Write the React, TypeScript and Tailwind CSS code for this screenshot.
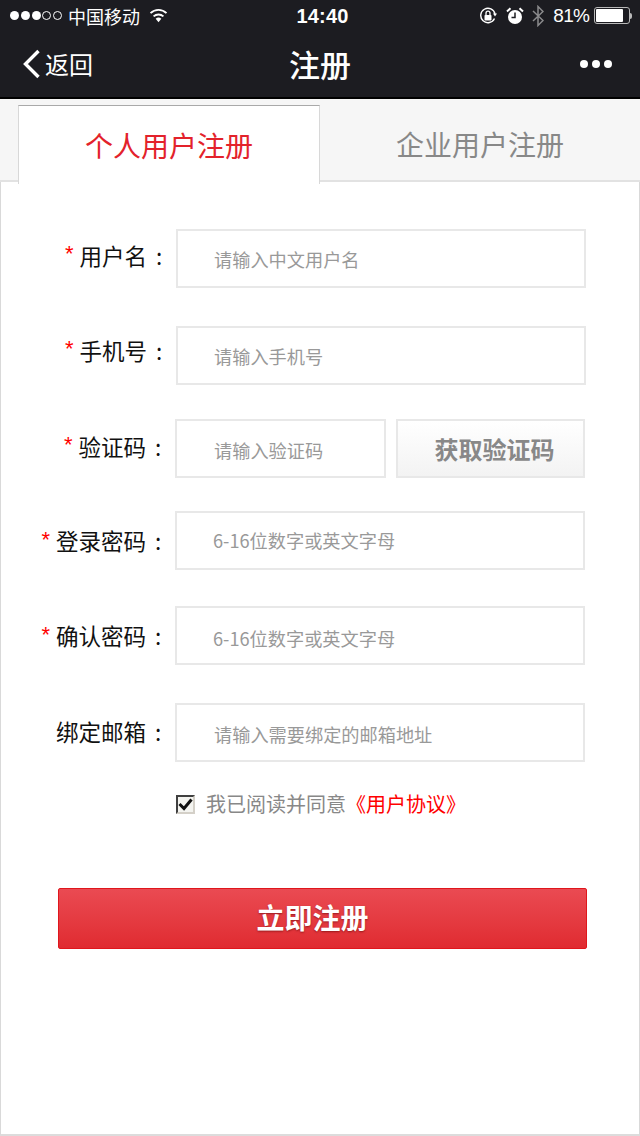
import React from "react";

const FONT = "font-['Noto_Sans_CJK_SC','Liberation_Sans',sans-serif]";

// ─── Status bar ────────────────────────────────────────────────────────────
const StatusBar = () => (
  <div className="flex h-[33px] items-center justify-between pb-[2px] pl-[10px] pr-[8px] text-white">
    <div className="flex w-[200px] items-center">
      <div className="flex gap-[1.75px]">
        {[0, 1, 2].map((i) => (
          <span key={i} className="h-[9px] w-[9px] rounded-full bg-white" />
        ))}
        {[3, 4].map((i) => (
          <span key={i} className="h-[9px] w-[9px] rounded-full border border-white" />
        ))}
      </div>
      <span className="ml-[6px] text-[18px] leading-[24px]">中国移动</span>
      <svg className="ml-[9px]" width="19" height="15" viewBox="0 0 20 15">
        <path d="M10 14.5 L7 10.8 A5 5 0 0 1 13 10.8 Z" fill="#fff" />
        <path d="M4.8 8.4 A7.8 7.8 0 0 1 15.2 8.4" fill="none" stroke="#fff" strokeWidth="2" />
        <path d="M1.6 5 A12 12 0 0 1 18.4 5" fill="none" stroke="#fff" strokeWidth="2" />
      </svg>
    </div>
    <span className="ml-[3px] font-['Liberation_Sans',sans-serif] text-[20px] font-bold leading-[24px] tracking-[0.2px]">14:40</span>
    <div className="flex w-[200px] items-center justify-end">
      <svg width="18" height="18" viewBox="0 0 18 18">
        <path d="M15.5 11.5 A7.2 7.2 0 1 1 16 7" fill="none" stroke="#fff" strokeWidth="1.4" />
        <path d="M14 6.5 L18 6.5 L16 9.5 Z" fill="#fff" />
        <rect x="5.5" y="8" width="7" height="5.5" rx="0.8" fill="#fff" />
        <path d="M7 8 V6.2 A2 2 0 0 1 11 6.2 V8" fill="none" stroke="#fff" strokeWidth="1.3" />
      </svg>
      <svg className="ml-[9px]" width="18" height="18" viewBox="0 0 18 18">
        <circle cx="9" cy="10" r="7" fill="#fff" />
        <path d="M9 5.5 V10.5 H5.5" fill="none" stroke="#1c1c21" strokeWidth="1.5" />
        <path d="M1 4.5 L4.5 1.2 M17 4.5 L13.5 1.2" stroke="#fff" strokeWidth="2" />
      </svg>
      <svg className="ml-[8px]" width="12" height="22" viewBox="0 0 12 22">
        <path d="M1 6 L11 15.5 L6 20.5 V1.5 L11 6.5 L1 16" fill="none" stroke="#8a8a8c" strokeWidth="1.5" />
      </svg>
      <span className="ml-[9px] font-['Liberation_Sans',sans-serif] text-[19px] leading-[24px] tracking-[-0.8px]">81%</span>
      <div className="ml-[5px] flex items-center">
        <div className="h-[17px] w-[36px] rounded-[3px] border border-[#b9b9b9] p-[1px]">
          <div className="h-full w-[27px] rounded-[1px] bg-white" />
        </div>
        <span className="h-[6px] w-[2px] rounded-r-[2px] bg-[#b9b9b9]" />
      </div>
    </div>
  </div>
);

const NavBar = () => (
  <div className="flex h-[66px] items-center justify-between border-b-2 border-b-black pb-[2px] pl-[22px] pr-[28px] text-white">
    <div className="flex w-[120px] items-center">
      <svg width="19" height="30" viewBox="0 0 19 30">
        <path d="M16.5 2 L3.5 15 L16.5 28" fill="none" stroke="#fff" strokeWidth="3.4" />
      </svg>
      <span className="ml-[4px] text-[24px] leading-[30px]">返回</span>
    </div>
    <span className="ml-[6px] text-[31px] font-medium leading-[40px]">注册</span>
    <div className="flex w-[120px] justify-end gap-[4px]">
      {[0, 1, 2].map((i) => (
        <span key={i} className="h-[8px] w-[8px] rounded-full bg-white" />
      ))}
    </div>
  </div>
);

// ─── Form rows ─────────────────────────────────────────────────────────────
const Label = ({ text, required, width, className }: { text: string; required?: boolean; width: number; className: string }) => (
  <div className={`flex shrink-0 items-center justify-end text-[22.5px] leading-[30px] text-[#111] ${className}`} style={{ width }}>
    {required && <span className="mr-[6px] mt-[-1px] font-['Liberation_Sans',sans-serif] text-[22px] text-[#f00]">*</span>}
    <span>{text}</span>
    <span className="ml-[9px] w-[20px] text-left">:</span>
  </div>
);

const Field = ({ hint, className }: { hint: string; className: string }) => (
  <div className={`flex h-[59px] items-center border-2 border-[#e8e8e8] bg-white text-[18.2px] leading-[24px] text-[#999] ${className}`}>
    {hint}
  </div>
);

export default function App() {
  return (
    <div className={`flex h-[1136px] w-[640px] flex-col overflow-hidden bg-white ${FONT}`}>
      <div className="bg-[#1c1c21]">
        <StatusBar />
        <NavBar />
      </div>

      {/* Tabs */}
      <div className="flex h-[83px] shrink-0 border-b-2 border-b-[#e2e2e2] bg-[#f6f6f6] pl-[18px] pt-[6px]">
        <div className="z-10 mb-[-2px] flex h-[79px] w-[302px] shrink-0 items-center justify-center border-x border-t border-x-[#d8d8d8] border-t-[#a9a9a9] bg-white text-[28px] leading-[36px] text-[#e3222b]">
          个人用户注册
        </div>
        <div className="flex h-[77px] w-[320px] shrink-0 items-center justify-center text-[28px] leading-[36px] text-[#888]">
          企业用户注册
        </div>
      </div>

      {/* Form */}
      <div className="flex flex-1 flex-col border-x border-b-2 border-x-[#d9d9d9] border-b-[#dcdcdc] pt-[47px]">
        <div className="flex h-[59px] items-center">
          <Label text="用户名" required width={175} className="mb-[8px]" />
          <Field hint="请输入中文用户名" className="w-[410px] pl-[36px]" />
        </div>
        <div className="mt-[38px] flex h-[59px] items-center">
          <Label text="手机号" required width={175} className="mb-[12px]" />
          <Field hint="请输入手机号" className="w-[410px] pl-[36px]" />
        </div>
        <div className="mt-[34px] flex h-[59px] items-center">
          <Label text="验证码" required width={174} className="mb-[6px]" />
          <Field hint="请输入验证码" className="w-[211px] pl-[37px] pt-[2px]" />
          <div className="ml-[10px] flex h-[59px] w-[189px] items-center justify-center border-2 border-[#e8e8e8] bg-gradient-to-b from-white to-[#f3f3f3] pl-[8px] text-[24px] font-bold leading-[30px] text-[#888]">
            获取验证码
          </div>
        </div>
        <div className="mt-[33px] flex h-[59px] items-center">
          <Label text="登录密码" required width={174} className="mb-[1px]" />
          <Field hint="6-16位数字或英文字母" className="w-[410px] pb-[2px] pl-[36px]" />
        </div>
        <div className="mt-[36px] flex h-[59px] items-center">
          <Label text="确认密码" required width={174} className="mb-[1px]" />
          <Field hint="6-16位数字或英文字母" className="w-[410px] pl-[36px] pt-[4px]" />
        </div>
        <div className="mt-[38px] flex h-[59px] items-center">
          <Label text="绑定邮箱" width={174} className="mb-[3px]" />
          <Field hint="请输入需要绑定的邮箱地址" className="w-[410px] pl-[37px] pt-[2px]" />
        </div>

        {/* Agreement */}
        <div className="ml-[175px] mt-[28px] flex h-[28px] items-center">
          <div className="flex h-[19px] w-[19px] items-center justify-center border-2 border-b-[#d4d0c8] border-l-[#404040] border-r-[#d4d0c8] border-t-[#404040] bg-[#f4f4f0]">
            <svg width="15" height="13" viewBox="0 0 15 13">
              <path d="M1.5 6 L6 10.5 L13.5 1.5" fill="none" stroke="#111" strokeWidth="3" />
            </svg>
          </div>
          <span className="ml-[11px] text-[20px] leading-[28px] text-[#888]">我已阅读并同意</span>
          <span className="text-[20px] leading-[28px] text-[#f00]">《用户协议》</span>
        </div>

        {/* Submit */}
        <div className="ml-[57px] mt-[70px] flex h-[61px] w-[529px] items-center justify-center rounded-[2px] border border-[#e0161c] bg-gradient-to-b from-[#ea4a52] to-[#e02a30] pb-[4px] pr-[20px] text-[28px] font-bold leading-[34px] text-white [text-shadow:0_1px_2px_rgba(90,0,0,0.55)]">
          立即注册
        </div>
      </div>
    </div>
  );
}
